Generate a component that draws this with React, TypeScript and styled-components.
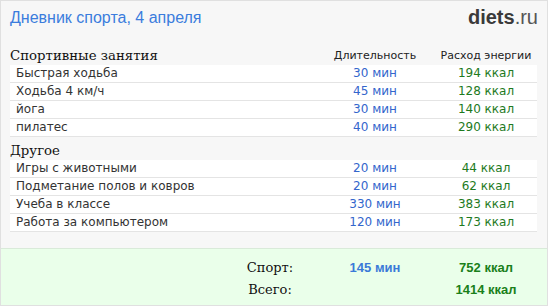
import React from "react";
import styled, { createGlobalStyle } from "styled-components";

const GlobalStyle = createGlobalStyle`
  body {
    margin: 0;
    background: #ffffff;
  }
`;

const Panel = styled.div`
  width: 548px;
  box-sizing: border-box;
  border: 1px solid #e0e0e0;
  background: #f7f7f7;
`;

const TopBar = styled.div`
  height: 33px;
  padding: 0 9px 0 9px;
  display: flex;
  align-items: center;
  justify-content: space-between;
`;

const Title = styled.div`
  font-family: "Liberation Sans", Arial, sans-serif;
  font-size: 16px;
  color: #3b7ddd;
`;

const Logo = styled.div`
  font-family: "Liberation Sans", Arial, sans-serif;
  font-size: 20px;
  color: #3a3a3a;
  font-weight: bold;
  span {
    font-weight: normal;
    color: #555555;
  }
`;

const Body = styled.div`
  padding: 0 10px 0 9px;
`;

const Section = styled.div<{ gap: number }>`
  margin-top: ${(p) => p.gap}px;
`;

const Cols = styled.div`
  display: grid;
  grid-template-columns: 1fr 120px 102px;
  align-items: center;
`;

const Head = styled(Cols)`
  height: 20px;
`;

const HeadTitle = styled.div`
  font-family: "DejaVu Serif", "Liberation Serif", serif;
  font-size: 13.3px;
  color: #111111;
`;

const HeadCol = styled.div`
  font-family: "DejaVu Sans", Verdana, sans-serif;
  font-size: 11px;
  color: #222222;
  text-align: center;
`;

const Row = styled(Cols)`
  height: 17px;
  background: #ffffff;
  border-bottom: 1px solid #e4e4e4;
  font-family: "DejaVu Sans", Verdana, sans-serif;
  font-size: 12px;
  line-height: 17px;
`;

const Name = styled.div`
  padding-left: 6px;
  color: #333333;
`;

const Value = styled.div<{ tone: "blue" | "green" }>`
  text-align: center;
  color: ${(p) => (p.tone === "blue" ? "#3366cc" : "#1e7a1e")};
`;

const Footer = styled.div`
  margin-top: 16px;
  background: #eaffea;
  border-top: 1px solid #d9ead9;
  padding: 7px 10px 5px 9px;
`;

const TotalRow = styled.div`
  display: grid;
  grid-template-columns: 1fr 90px 120px 102px;
  align-items: center;
  height: 22px;
`;

const TotalLabel = styled.div`
  grid-column: 2;
  font-family: "DejaVu Serif", "Liberation Serif", serif;
  font-size: 13px;
  color: #111111;
  text-align: center;
`;

const TotalValue = styled.div<{ tone: "blue" | "green" }>`
  font-family: "Liberation Sans", Arial, sans-serif;
  font-size: 13px;
  font-weight: bold;
  text-align: center;
  color: ${(p) => (p.tone === "blue" ? "#3a7ad8" : "#1a801a")};
`;

type Activity = { name: string; min: number; kcal: number };

const sport: Activity[] = [
  { name: "Быстрая ходьба", min: 30, kcal: 194 },
  { name: "Ходьба 4 км/ч", min: 45, kcal: 128 },
  { name: "йога", min: 30, kcal: 140 },
  { name: "пилатес", min: 40, kcal: 290 },
];

const other: Activity[] = [
  { name: "Игры с животными", min: 20, kcal: 44 },
  { name: "Подметание полов и ковров", min: 20, kcal: 62 },
  { name: "Учеба в классе", min: 330, kcal: 383 },
  { name: "Работа за компьютером", min: 120, kcal: 173 },
];

const ActivityRows = ({ items }: { items: Activity[] }) => (
  <>
    {items.map((a) => (
      <Row key={a.name}>
        <Name>{a.name}</Name>
        <Value tone="blue">{a.min} мин</Value>
        <Value tone="green">{a.kcal} ккал</Value>
      </Row>
    ))}
  </>
);

const App = () => (
  <>
    <GlobalStyle />
    <Panel>
      <TopBar>
        <Title>Дневник спорта, 4 апреля</Title>
        <Logo>
          diets<span>.ru</span>
        </Logo>
      </TopBar>
      <Body>
        <Section gap={11}>
          <Head>
            <HeadTitle>Спортивные занятия</HeadTitle>
            <HeadCol>Длительность</HeadCol>
            <HeadCol>Расход энергии</HeadCol>
          </Head>
          <ActivityRows items={sport} />
        </Section>
        <Section gap={3}>
          <Head>
            <HeadTitle>Другое</HeadTitle>
          </Head>
          <ActivityRows items={other} />
        </Section>
      </Body>
      <Footer>
        <TotalRow>
          <TotalLabel>Спорт:</TotalLabel>
          <TotalValue tone="blue">145 мин</TotalValue>
          <TotalValue tone="green">752 ккал</TotalValue>
        </TotalRow>
        <TotalRow>
          <TotalLabel>Всего:</TotalLabel>
          <div />
          <TotalValue tone="green">1414 ккал</TotalValue>
        </TotalRow>
      </Footer>
    </Panel>
  </>
);

export default App;
